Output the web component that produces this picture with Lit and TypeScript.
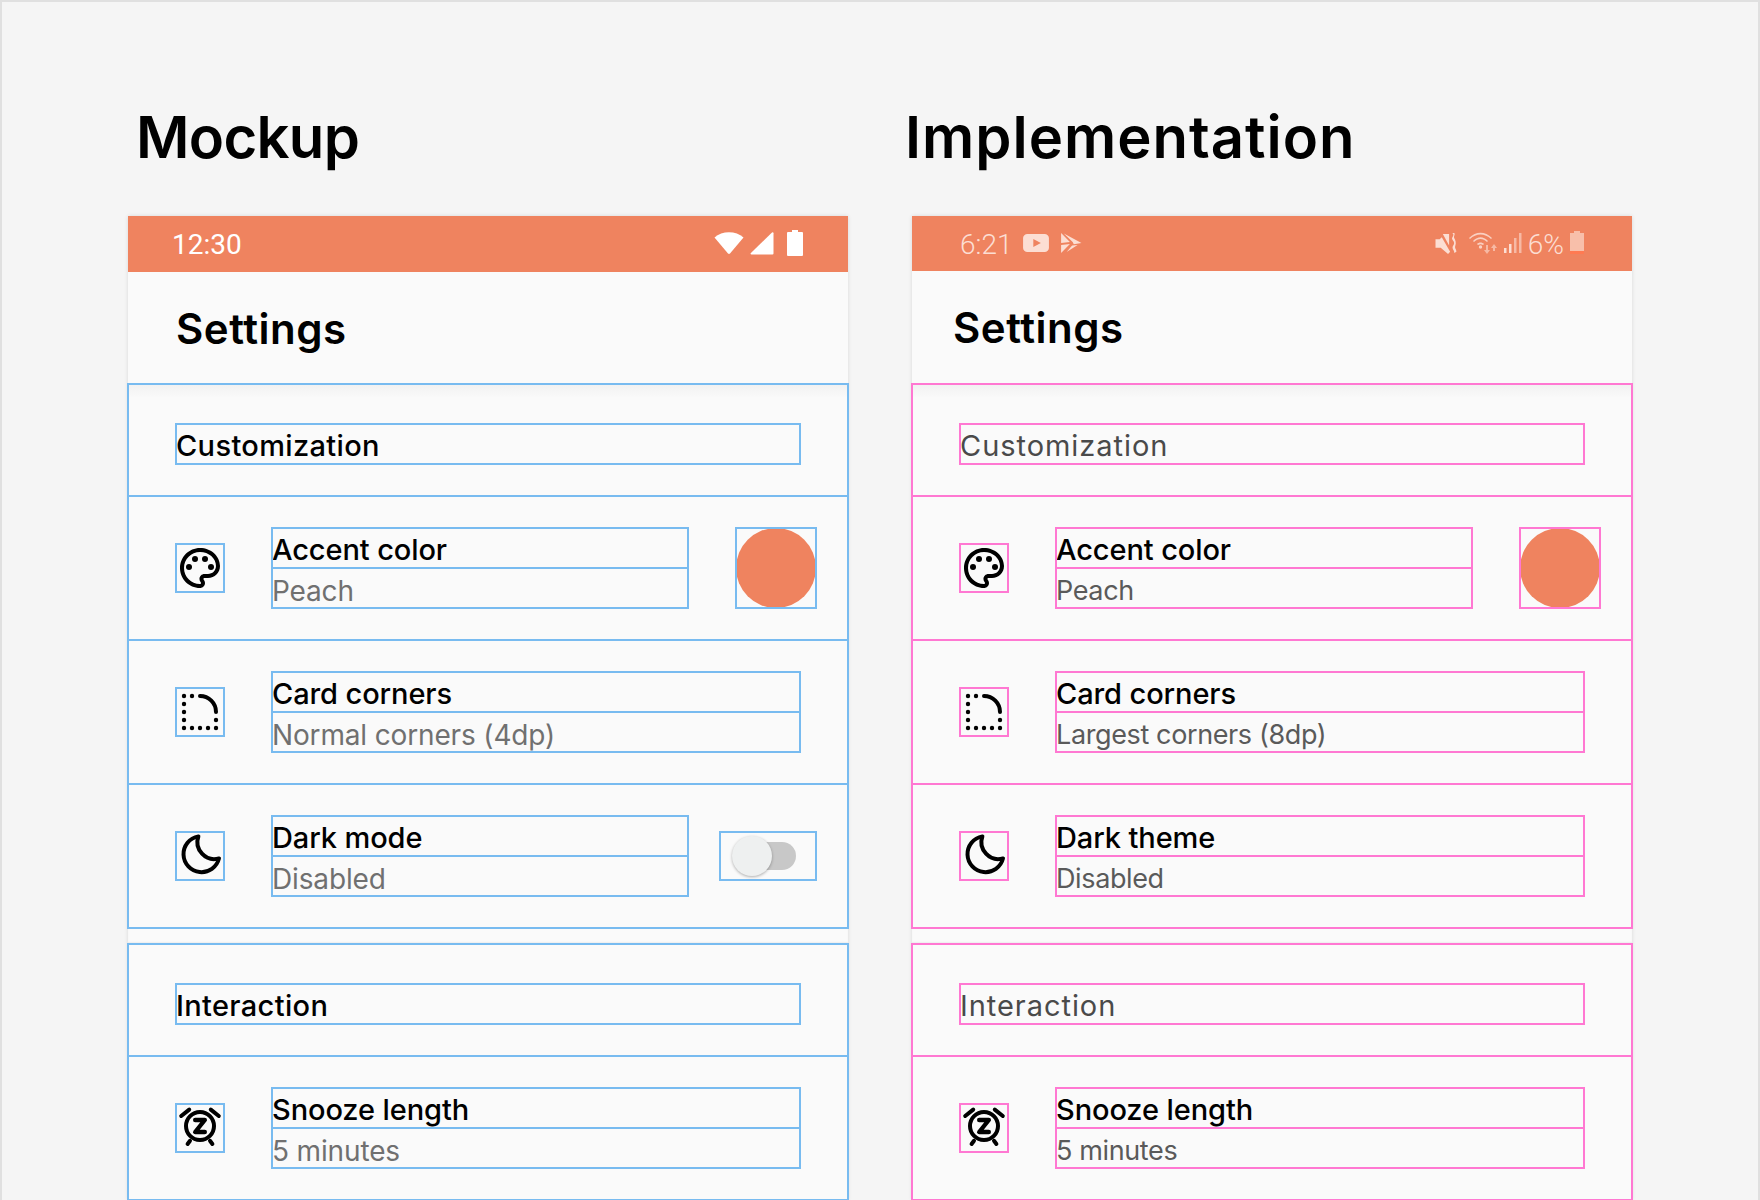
import { LitElement, html, css, svg, nothing } from 'lit';
import { customElement, property } from 'lit/decorators.js';

const ICONS: Record<string, unknown> = {
  palette: svg`<path d="M12 22C6.49 22 2 17.51 2 12S6.49 2 12 2s10 4.04 10 9c0 3.31-2.69 6-6 6h-1.77c-.28 0-.5.22-.5.5 0 .12.05.23.13.33.41.47.64 1.06.64 1.67 0 1.38-1.12 2.5-2.5 2.5zm0-18c-4.41 0-8 3.59-8 8s3.59 8 8 8c.28 0 .5-.22.5-.5 0-.16-.08-.28-.14-.35-.41-.46-.63-1.05-.63-1.65 0-1.38 1.12-2.5 2.5-2.5H16c2.21 0 4-1.79 4-4 0-3.86-3.59-7-8-7z"/>
    <circle cx="6.5" cy="11.5" r="1.5"/><circle cx="9.5" cy="7.5" r="1.5"/><circle cx="14.5" cy="7.5" r="1.5"/><circle cx="17.5" cy="11.5" r="1.5"/>`,
  corners: svg`<path d="M12 4A8 8 0 0 1 20 12" fill="none" stroke="#000" stroke-width="2" stroke-linecap="round"/>
    ${[[4, 4], [8, 4], [4, 8], [4, 12], [4, 16], [4, 20], [8, 20], [12, 20], [16, 20], [20, 20], [20, 16]].map(
      ([x, y]) => svg`<circle cx=${x} cy=${y} r="1.1"/>`
    )}`,
  moon: svg`<path d="M11.2 2.2A9 9 0 1 0 21.5 13.2A8.5 8.5 0 0 1 11.2 2.2Z" fill="none" stroke="#000" stroke-width="2" stroke-linejoin="round"/>`,
  snooze: svg`<g fill="none" stroke="#000" stroke-width="2" stroke-linecap="round" stroke-linejoin="round">
    <circle cx="12" cy="11" r="7"/><path d="M2.600 6 6.600 2.800M21.400 6l-4-3.200M5.800 20l1.200-1.600M18.200 20l-1.200-1.600"/>
    <path d="M9.600 8h4.800l-4.800 6h4.800" stroke-width="2.2"/></g>`,
};

interface Row {
  icon: string;
  title: string;
  sub: string;
  trail?: 'swatch' | 'switch';
}

const MOCKUP: Row[] = [
  { icon: 'palette', title: 'Accent color', sub: 'Peach', trail: 'swatch' },
  { icon: 'corners', title: 'Card corners', sub: 'Normal corners (4dp)' },
  { icon: 'moon', title: 'Dark mode', sub: 'Disabled', trail: 'switch' },
];

const IMPL: Row[] = [
  { icon: 'palette', title: 'Accent color', sub: 'Peach', trail: 'swatch' },
  { icon: 'corners', title: 'Card corners', sub: 'Largest corners (8dp)' },
  { icon: 'moon', title: 'Dark theme', sub: 'Disabled' },
];

const SNOOZE: Row = { icon: 'snooze', title: 'Snooze length', sub: '5 minutes' };

@customElement('settings-panel')
class SettingsPanel extends LitElement {
  static styles = css`
    :host {
      display: block;
      width: 720px;
      background: #fafafa;
      box-shadow: 0 0 4px rgba(0, 0, 0, 0.12);
      --line: #78bbf0;
      --head: #000;
      --head-weight: 500;
      --head-spacing: 0.35px;
      --sub: #707070;
      --sub-size: 28px;
      --sub-spacing: -0.15px;
      font-family: Inter, 'Noto Sans', sans-serif;
      color: #000;
    }
    :host([variant='impl']) {
      --line: #ff78d2;
      --head: #4a4a4a;
      --head-weight: 400;
      --head-spacing: 0.95px;
      --sub: #5a5a5a;
      --sub-size: 27px;
      --sub-spacing: -0.38px;
    }
    .status {
      height: 56px;
      box-sizing: border-box;
      background: #ef835f;
      display: flex;
      align-items: center;
      padding: 0 45px 0 44px;
      color: #fff;
      font: 400 28px Roboto, sans-serif;
      gap: 14px;
    }
    .status .push {
      flex: 1;
    }
    .status svg {
      display: block;
      fill: #fff;
      margin-top: -2px;
    }
    :host([variant='impl']) .status {
      height: 55px;
      padding: 1px 48px 0 48px;
      margin-bottom: 1px;
      gap: 10px;
      color: #fcded3;
      font-weight: 300;
    }
    :host([variant='impl']) .status svg {
      fill: #fcded3;
    }
    .appbar {
      height: 112px;
      box-sizing: border-box;
      padding-left: 48px;
      font-size: 42px;
      font-weight: 600;
      line-height: 114px;
      letter-spacing: 0.5px;
    }
    :host([variant='impl']) .appbar {
      padding-left: 41px;
      line-height: 111px;
    }
    .section {
      outline: 2px solid var(--line);
      outline-offset: -1px;
    }
    .shaded {
      background: linear-gradient(#f1f1f1, #fafafa 14px);
    }
    .sec-head {
      height: 112px;
      box-sizing: border-box;
      padding: 40px 48px 32px;
      outline: 2px solid var(--line);
      outline-offset: -1px;
    }
    .box {
      outline: 2px solid var(--line);
      outline-offset: -1px;
    }
    .label {
      height: 40px;
      line-height: 44px;
      font-size: 29px;
      font-weight: 500;
      white-space: nowrap;
      letter-spacing: -0.1px;
    }
    .sec-head .label {
      color: var(--head);
      font-weight: var(--head-weight);
      letter-spacing: var(--head-spacing);
    }
    .sub {
      color: var(--sub);
      font-size: var(--sub-size);
      font-weight: 400;
      letter-spacing: var(--sub-spacing);
      line-height: 46px;
    }
    .row {
      height: 144px;
      box-sizing: border-box;
      padding: 32px 48px;
      display: flex;
      align-items: center;
      gap: 48px;
      outline: 2px solid var(--line);
      outline-offset: -1px;
    }
    .icon {
      width: 48px;
      height: 48px;
      flex: none;
      display: block;
    }
    .text {
      flex: 1;
      min-width: 0;
    }
    .swatch-box {
      width: 80px;
      height: 80px;
      flex: none;
      margin-right: -16px;
    }
    .swatch {
      width: 80px;
      height: 80px;
      border-radius: 50%;
      background: #ef835f;
    }
    .switch-box {
      width: 96px;
      height: 48px;
      flex: none;
      margin: 0 -16px;
      box-sizing: border-box;
      padding: 10px 20px;
    }
    .track {
      position: relative;
      width: 56px;
      height: 28px;
      border-radius: 14px;
      background: #c8c8c8;
    }
    .thumb {
      position: absolute;
      left: -8px;
      top: -6px;
      width: 40px;
      height: 40px;
      border-radius: 50%;
      background: #eef0f0;
      box-shadow: 0 1px 3px rgba(0, 0, 0, 0.3);
    }
    .gap {
      height: 16px;
      box-shadow: inset 0 -2px 2px -1px rgba(0, 0, 0, 0.15);
    }
    .percent {
      margin-left: -5px;
    }
    .batt {
      margin-left: -4px;
    }
  `;

  @property({ reflect: true }) variant = 'mock';

  private _row(r: Row) {
    return html`<div class="row">
      <svg class="icon box" viewBox="0 0 24 24">${ICONS[r.icon]}</svg>
      <div class="text">
        <div class="label box">${r.title}</div>
        <div class="label sub box">${r.sub}</div>
      </div>
      ${r.trail === 'swatch'
        ? html`<div class="swatch-box box"><div class="swatch"></div></div>`
        : r.trail === 'switch'
        ? html`<div class="switch-box box"><div class="track"><div class="thumb"></div></div></div>`
        : nothing}
    </div>`;
  }

  private _status() {
    if (this.variant === 'impl') {
      return html`<div class="status">
        <span>6:21</span>
        <svg width="28" height="20" viewBox="0 0 26 20" preserveAspectRatio="none">
          <path fill-rule="evenodd" d="M5 1h16a4 4 0 0 1 4 4v10a4 4 0 0 1-4 4H5a4 4 0 0 1-4-4V5a4 4 0 0 1 4-4zm5.500 5v8l7-4z" />
        </svg>
        <svg width="22" height="22" viewBox="0 0 20 22" preserveAspectRatio="none">
          <path d="M1 1l8 9-8 1zM1 13l8-1-8 9zM3.500 1.500 19.500 11l-7 1.200-1-2.200zM11 13.500l5-.6-10 7z" />
        </svg>
        <span class="push"></span>
        <svg width="24" height="23" viewBox="0 0 22 22">
          <path d="M0 7h4l2-2 8 14-2 2-7-6H0zM7 2l6 0 0 11zM16 1c3 2-1 4 0 6s3 3 1 6 1 4 1 7l2-1c0-3-2-3-1-6s0-5-1-7 1-3 0-5z" />
        </svg>
        <svg width="30" height="24" viewBox="0 0 30 24" fill-opacity="0.85">
          <path d="M0 7C7 0 16 0 23 7l-1 1C16 2 7 2 1 8zM4 10c5-5 10-5 15 0l-1 1c-4-4-9-4-13 0zM8 13c2-2 5-2 7 0l-1 1c-2-1-3-1-5 0z" />
          <circle cx="11.500" cy="16" r="1.700" />
          <path d="M17 14h2v5h2l-3 4-3-4h2zM25 13l3 4h-2v3h-2v-3h-2z" opacity="0.7" />
        </svg>
        <svg width="20" height="20" viewBox="0 0 20 20" style="margin-left:-6px">
          <rect x="1" y="15" width="2.500" height="5" /><rect x="6" y="11" width="2.500" height="9" />
          <rect x="11" y="5" width="2.500" height="15" opacity="0.6" /><rect x="16" y="0" width="2.500" height="20" opacity="0.6" />
        </svg>
        <span class="percent">6%</span>
        <svg class="batt" width="14" height="24" viewBox="0 0 14 24">
          <path d="M4 0h6v2h4v18H0V2h4z" opacity="0.65" /><rect y="20" width="14" height="3" style="fill:#ff7a52" />
        </svg>
      </div>`;
    }
    return html`<div class="status">
      <span>12:30</span>
      <span class="push"></span>
      <svg width="30" height="24" viewBox="0 0 30 24" style="margin-right:-8px">
        <path d="M0.500 6.500C8-.5 22-.5 29.500 6.500L16 22.500a1.500 1.500 0 0 1-2 0z" />
      </svg>
      <svg width="24" height="24" viewBox="0 0 24 24" style="margin-right:-1px">
        <path d="M22 1.500a1 1 0 0 1 1.500 .8V22.500a1 1 0 0 1-1 1H1.500c-1 0-1.200-.8-.6-1.400z" />
      </svg>
      <svg width="16" height="26" viewBox="0 0 16 26">
        <path d="M5 0h6v2h4a1 1 0 0 1 1 1v22a1 1 0 0 1-1 1H1a1 1 0 0 1-1-1V3a1 1 0 0 1 1-1h4z" />
      </svg>
    </div>`;
  }

  render() {
    const rows = this.variant === 'impl' ? IMPL : MOCKUP;
    return html`
      ${this._status()}
      <div class="appbar">Settings</div>
      <div class="section shaded">
        <div class="sec-head"><div class="label box">Customization</div></div>
      </div>
      ${rows.map((r) => this._row(r))}
      <div class="gap"></div>
      <div class="section">
        <div class="sec-head"><div class="label box">Interaction</div></div>
      </div>
      ${this._row(SNOOZE)}
    `;
  }
}

@customElement('app-root')
export class AppRoot extends LitElement {
  static styles = css`
    :host {
      display: block;
      width: 1760px;
      height: 1200px;
      overflow: hidden;
      box-sizing: border-box;
      background: #f5f5f5;
      border: 2px solid #e0e0e0;
      border-bottom: none;
      font-family: Inter, 'Noto Sans', sans-serif;
    }
    .columns {
      display: grid;
      grid-template-columns: 720px 720px;
      column-gap: 64px;
      padding: 94px 0 0 126px;
    }
    h1 {
      margin: 0;
      height: 120px;
      font-size: 58px;
      line-height: 82px;
      font-weight: 600;
      color: #000;
      letter-spacing: -0.7px;
    }
    .mock-title {
      margin-left: 8px;
    }
    .impl-title {
      margin-left: -7px;
      letter-spacing: 1px;
    }
  `;

  render() {
    return html`<div class="columns">
      <div>
        <h1 class="mock-title">Mockup</h1>
        <settings-panel variant="mock"></settings-panel>
      </div>
      <div>
        <h1 class="impl-title">Implementation</h1>
        <settings-panel variant="impl"></settings-panel>
      </div>
    </div>`;
  }
}
